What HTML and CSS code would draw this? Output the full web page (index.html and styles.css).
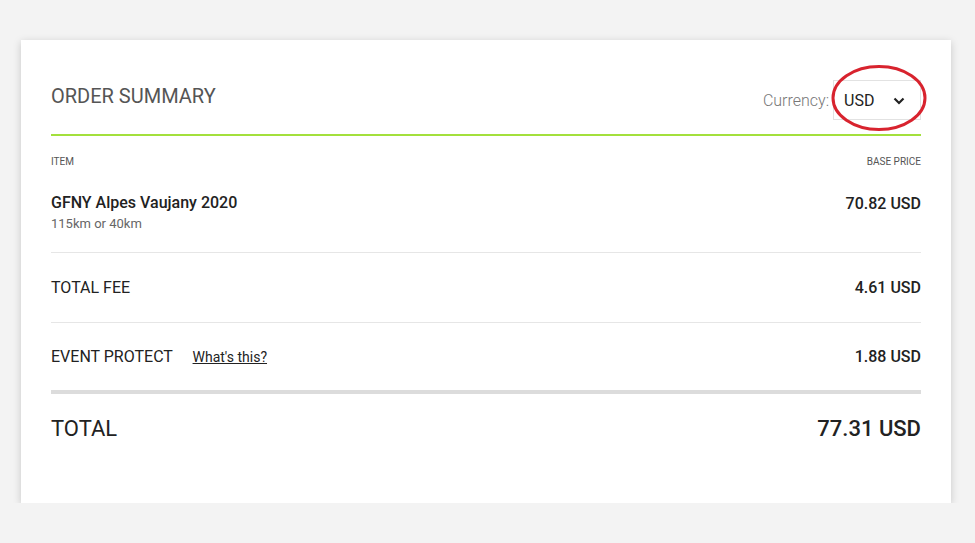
FILE: index.html
```html
<!DOCTYPE html>
<html>
<head>
<meta charset="utf-8">
<link rel="stylesheet" href="styles.css">
</head>
<body>
<div class="card">
  <div class="header">
    <h1 class="title">ORDER SUMMARY</h1>
    <div class="currency">
      <span class="currency-label">Currency:</span>
      <div class="select">
        <span>USD</span>
        <svg class="chev" width="12" height="8" viewBox="0 0 12 8"><path d="M1.5 1.5 L6 6 L10.5 1.5" fill="none" stroke="#222" stroke-width="2.2"/></svg>
        <svg class="ring" width="100" height="70" viewBox="0 0 100 70"><ellipse cx="50" cy="35" rx="46" ry="31.5" fill="none" stroke="#d8232e" stroke-width="3"/></svg>
      </div>
    </div>
  </div>
  <div class="thead">
    <span>ITEM</span>
    <span>BASE PRICE</span>
  </div>
  <div class="row item">
    <div>
      <div class="name">GFNY Alpes Vaujany 2020</div>
      <div class="sub">115km or 40km</div>
    </div>
    <div class="price">70.82 USD</div>
  </div>
  <div class="row">
    <div class="label">TOTAL FEE</div>
    <div class="price">4.61 USD</div>
  </div>
  <div class="row last">
    <div class="label">EVENT PROTECT <a class="link" href="#">What's this?</a></div>
    <div class="price">1.88 USD</div>
  </div>
  <div class="total">
    <div class="total-label">TOTAL</div>
    <div class="total-price">77.31 USD</div>
  </div>
</div>
</body>
</html>
```

FILE: styles.css
```css
* { box-sizing: border-box; }
html, body { margin: 0; padding: 0; }
body {
  background: #f3f3f3;
  font-family: Roboto, "Liberation Sans", sans-serif;
  color: #222;
  padding: 40px 24px 0 21px;
}
.card {
  width: 930px;
  height: 463px;
  background: #fff;
  box-shadow: 0 2px 8px rgba(0,0,0,0.18);
  padding: 40px 30px 0 30px;
}
.header {
  display: flex;
  justify-content: space-between;
  align-items: center;
  height: 56px;
  padding-bottom: 14px;
  border-bottom: 2px solid #a3e03c;
}
.title {
  margin: 0 0 9px 0;
  font-size: 20px;
  font-weight: 400;
  color: #555;
  line-height: 24px;
}
.currency {
  display: flex;
  align-items: center;
}
.currency-label {
  font-size: 16px;
  font-weight: 300;
  color: #777;
  margin-right: 4px;
}
.select {
  position: relative;
  width: 88px;
  height: 40px;
  border: 1px solid #e2e2e2;
  display: flex;
  align-items: center;
  justify-content: space-between;
  padding: 0 15px 0 10px;
  font-size: 16px;
  color: #222;
}
.chev { display: block; margin-top: 1px; }
.ring {
  position: absolute;
  left: -5px;
  top: -18px;
}
.thead {
  display: flex;
  justify-content: space-between;
  margin-top: 19px;
  font-size: 10px;
  line-height: 14px;
  color: #555;
}
.row {
  display: flex;
  justify-content: space-between;
  align-items: flex-start;
  padding: 24px 0 24px;
  border-bottom: 1px solid #e6e6e6;
  font-size: 16px;
  line-height: 21px;
}
.row.item { padding: 24px 0 20px; }
.row.last { padding: 23px 0 22px; border-bottom: 4px solid #dcdcdc; }
.name { font-weight: 500; font-size: 16px; line-height: 20px; }
.sub { font-size: 13px; color: #666; line-height: 17px; margin-top: 2px; }
.price { font-weight: 500; font-size: 16px; }
.label { font-weight: 400; }
.link {
  color: #222;
  font-size: 14px;
  margin-left: 16px;
  text-decoration: underline;
}
.total {
  display: flex;
  justify-content: space-between;
  align-items: center;
  padding-top: 21px;
  font-size: 22px;
  line-height: 28px;
}
.total-price { font-weight: 500; }
```
